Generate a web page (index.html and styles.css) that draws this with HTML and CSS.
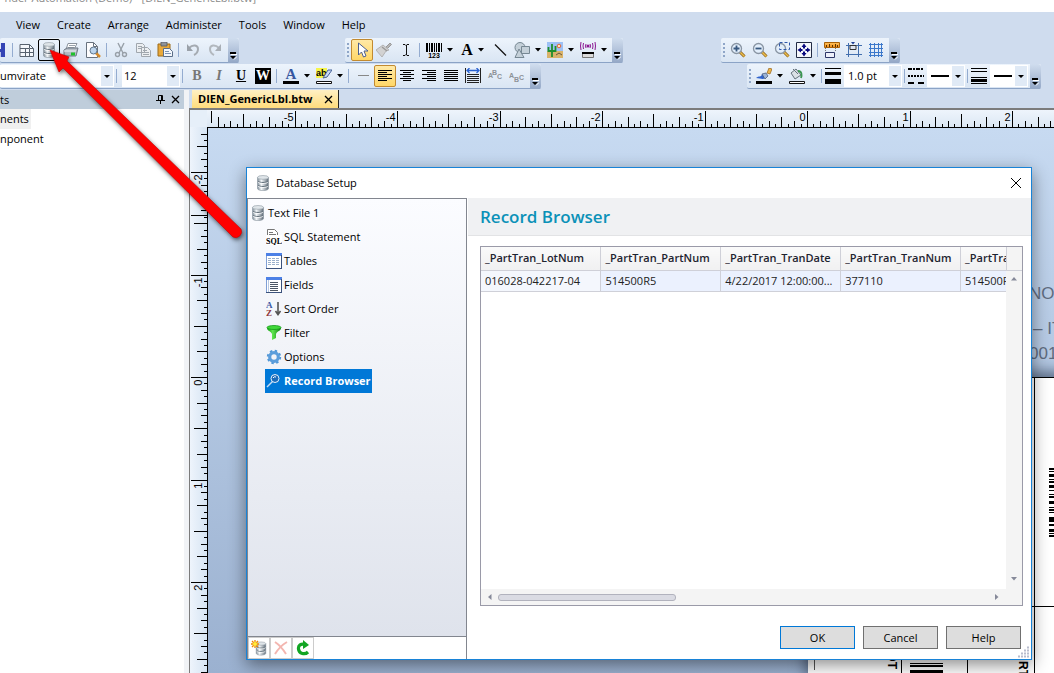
FILE: index.html
```
<!DOCTYPE html>
<html lang="en">
<head>
  <meta charset="UTF-8">
  <meta name="viewport" content="width=device-width, initial-scale=1.0">
  <title>Database Setup</title>
  <link rel="stylesheet" href="styles.css">
</head>
<body>

  <!-- shared icons -->
  <svg class="defs" aria-hidden="true">
    <defs>
      <linearGradient id="metal"><stop offset="0" stop-color="#7d8b96"/><stop offset=".35" stop-color="#f4f7f9"/><stop offset="1" stop-color="#5f6c78"/></linearGradient>
      <linearGradient id="leaf"><stop offset="0" stop-color="#119a11"/><stop offset=".4" stop-color="#5ee64e"/><stop offset="1" stop-color="#0a7d10"/></linearGradient>
      <linearGradient id="gold" x2="0" y2="1"><stop offset="0" stop-color="#ffc561"/><stop offset="1" stop-color="#ef8a16"/></linearGradient>
    </defs>
    <symbol id="db" viewBox="0 0 16 16">
      <path d="M2.500 2.500v11c0 2.800 11 2.800 11 0v-11z" fill="url(#metal)" stroke="#8a96a0" stroke-width=".6"/>
      <ellipse cx="8" cy="2.400" rx="5.500" ry="1.900" fill="#dfe5e9" stroke="#8f9aa3" stroke-width=".6"/>
      <path d="M3 6c1 2 9 2 10 0M3 10c1 2 9 2 10 0" fill="none" stroke="#65727d"/>
      <path d="M3 7c1 2 9 2 10 0M3 11c1 2 9 2 10 0" fill="none" stroke="#fff" stroke-width=".8"/>
    </symbol>
    <symbol id="lens" viewBox="0 0 16 16">
      <path d="M10 10l4.500 4.500" stroke="#8a5a10" stroke-width="3"/>
      <path d="M10 10l4.500 4.500" stroke="#e9bd4e" stroke-width="1.600"/>
      <circle cx="6.500" cy="6.500" r="5" fill="#e2eefb" stroke="#8995a3" stroke-width="1.300"/>
    </symbol>
    <symbol id="caret" viewBox="0 0 6 4"><path d="M0 0h6L3 3.500z"/></symbol>
    <symbol id="more" viewBox="0 0 7 8"><path d="M0 0h6v2H0zM0 4h6L3 7z"/><path d="M1 2.500h6M4 7.500l3-3" fill="none" stroke="#fff"/></symbol>
  </svg>

  <header class="titlebar"><div class="caption"><span>nder Automation (Demo) - [DIEN_GenericLbl.btw]</span></div></header>

  <nav class="menu">
    <button>View</button>
    <button>Create</button>
    <button>Arrange</button>
    <button>Administer</button>
    <button>Tools</button>
    <button>Window</button>
    <button>Help</button>
  </nav>

  <div class="toolrow">
    <div class="toolbar">
      <button class="tool clipped" aria-label="Save"><svg viewBox="0 0 16 16"><path d="M1 1h14v14H3l-2-2z" fill="#3444b5"/><path d="M4 1h7v6H4z" fill="#dfe6fb"/><path d="M5 10h6v5H5z" fill="#b9c3ea"/></svg></button>
      <i class="sep"></i>
      <button class="tool" aria-label="Page setup"><svg viewBox="0 0 16 16"><path d="M1 2.500h9.500l4 4v8H1z" fill="#f4f7fb" stroke="#56616e"/><path d="M10.500 2.500v4h4M1 6.500h9M1 10.500h14M6.500 6v8M10.500 7v7" fill="none" stroke="#56616e"/></svg></button>
      <button class="tool framed" aria-label="Database setup"><svg><use href="#db"/></svg></button>
      <button class="tool" aria-label="Print"><svg viewBox="0 0 16 16"><path d="M5 1.500h9l-3 6H3z" fill="#fff" stroke="#8a929c"/><path d="M6 3.500h6M5 5.500h6" stroke="#9aa3ac"/><path d="M1 8l3-2h11l-2 8H1z" fill="#b5bcc4" stroke="#6d7783"/><path d="M1 9h12" stroke="#eef2f6"/><path d="M8 10.500h4v3H8z" fill="#1fc32b"/></svg></button>
      <button class="tool" aria-label="Print preview"><svg viewBox="0 0 16 16"><path d="M1.500.5h7l4 4v11h-11z" fill="#fdfdfe" stroke="#68727e"/><path d="M8.500.5v4h4" fill="none" stroke="#68727e"/><path d="M11 11l4 4" stroke="#d58b2b" stroke-width="2.500"/><circle cx="8.500" cy="8.500" r="3.500" fill="#bcd5ee" stroke="#60768c"/></svg></button>
      <i class="sep"></i>
      <button class="tool" aria-label="Cut"><svg viewBox="0 0 16 16" fill="none" stroke="#98a0a8" stroke-width="1.400"><path d="M5 1l5 10M11 1L6 11"/><circle cx="4.500" cy="12.500" r="2"/><circle cx="11.500" cy="12.500" r="2"/></svg></button>
      <button class="tool" aria-label="Copy"><svg viewBox="0 0 16 16" fill="#eceff2" stroke="#a0a7ae"><path d="M1.500 1.500h6l2 2v7h-8zM6.500 5.500h6l3 3v6h-9z"/><path d="M3 4.500h4M3 6.500h3M8 8.500h4M8 10.500h6M8 12.500h6"/></svg></button>
      <button class="tool" aria-label="Paste"><svg viewBox="0 0 16 16"><path d="M1 2h12v12H1z" fill="#e9a93a" stroke="#9c6a19"/><path d="M4 0h6v4H4z" fill="#8f9399" stroke="#55595f" stroke-width=".8"/><path d="M6.500 6.500h6l3 3v5h-9z" fill="#f3f7fc" stroke="#5b6e88"/><path d="M8 9.500h4M8 11.500h6" stroke="#7b93b3"/></svg></button>
      <i class="sep"></i>
      <button class="tool" aria-label="Undo"><svg viewBox="0 0 16 16"><path d="M4 6c4-4 9-3 9 1 0 3-2 5-4 6" fill="none" stroke="#a5abb2" stroke-width="2"/><path d="M2 2v7h6z" fill="#9aa1a9"/></svg></button>
      <button class="tool" aria-label="Redo"><svg viewBox="0 0 16 16"><path d="M12 6c-4-4-9-3-9 1 0 3 2 5 4 6" fill="none" stroke="#b2b8be" stroke-width="2"/><path d="M14 2v7H8z" fill="#a9afb6"/></svg></button>
      <button class="overflow" aria-label="More"><svg><use href="#more"/></svg></button>
    </div>

    <div class="toolbar gap-create">
      <i class="grip"></i>
      <button class="tool active" aria-label="Select"><svg viewBox="0 0 16 16"><path d="M4.500 1v12l3-3 2 5 2.500-1-2-5h4z" fill="#fff" stroke="#4c5f8e"/></svg></button>
      <button class="tool" aria-label="Format painter"><svg viewBox="0 0 16 16"><path d="M10 5l4-4 1.500 1.500-4 4z" fill="#b5b5b5" stroke="#9a9a9a"/><path d="M7 3l6 5-3 1-4 6-6-7z" fill="#d2d2d2" stroke="#b3b3b3"/><path d="M6 5l5 4" stroke="#999" stroke-width="1.500"/></svg></button>
      <button class="tool" aria-label="Text cursor"><svg viewBox="0 0 16 16" fill="none" stroke="#111"><path d="M5 2.500h2l1 1 1-1h2M5 13.500h2l1-1 1 1h2M8.500 3v10"/></svg></button>
      <i class="sep"></i>
      <button class="tool split" aria-label="Barcode"><svg viewBox="0 0 16 16"><path d="M0 1h2v9H0zM3 1h1v9H3zM5 1h2v9H5zM8 1h1v9H8zM10 1h1v9h-1zM12 1h2v9h-2zM15 1h1v9h-1z"/><text x="8" y="16" class="tiny" text-anchor="middle">123</text></svg><svg class="caret"><use href="#caret"/></svg></button>
      <button class="tool split serif"><span>A</span><svg class="caret"><use href="#caret"/></svg></button>
      <button class="tool" aria-label="Line"><svg viewBox="0 0 16 16"><path d="M3 2.500l11 11" stroke="#111" stroke-width="1.200"/></svg></button>
      <button class="tool split" aria-label="Shape"><svg viewBox="0 0 16 16" fill="#c4d0d9" stroke="#768793"><circle cx="6" cy="5.500" r="5"/><path d="M5 7L1 15.500h9z"/><path d="M7.500 4.500h8v7h-8z"/></svg><svg class="caret"><use href="#caret"/></svg></button>
      <button class="tool split" aria-label="Picture"><svg viewBox="0 0 16 16"><path d="M0 0h16v16H0z" fill="#9dc1f5"/><path d="M0 9h16v7H0z" fill="#d9b36a"/><circle cx="12" cy="4" r="1.800" fill="#ffe3b8" stroke="#e0663a"/><path d="M5 2v13M1.500 5v4H5M8.500 4v5H5" fill="none" stroke="#1f8f2c" stroke-width="1.800"/><path d="M9 13l3-2 3 2" fill="none" stroke="#69573a"/></svg><svg class="caret"><use href="#caret"/></svg></button>
      <button class="tool split" aria-label="RFID"><svg viewBox="0 0 16 16"><path d="M1 0q-1 4 0 8M3.500 1q-1 3 0 6M6 2q-1 2 0 4M15 0q1 4 0 8M12.500 1q1 3 0 6M10 2q1 2 0 4" fill="none" stroke="#8d1a93"/><circle cx="8" cy="4" r="1.500" fill="#8d1a93"/><path d="M2.500 10.500h11v5h-11z" fill="#dcdcdc" stroke="#777"/><path d="M2 10h12v2H2z"/></svg><svg class="caret"><use href="#caret"/></svg></button>
      <button class="overflow" aria-label="More"><svg><use href="#more"/></svg></button>
    </div>

    <div class="toolbar gap-view">
      <i class="grip"></i>
      <button class="tool" aria-label="Zoom in"><svg viewBox="0 0 16 16"><use href="#lens"/><path d="M3.500 6.500h6M6.500 3.500v6" stroke="#38587f" stroke-width="1.800"/></svg></button>
      <button class="tool" aria-label="Zoom out"><svg viewBox="0 0 16 16"><use href="#lens"/><path d="M3.500 6.500h6" stroke="#38587f" stroke-width="1.800"/></svg></button>
      <button class="tool" aria-label="Zoom selection"><svg viewBox="0 0 16 16"><use href="#lens"/><path d="M5.500.5h10v7h-10z" fill="none" stroke="#2f57a8" stroke-dasharray="3 2"/></svg></button>
      <button class="tool" aria-label="Fit page"><svg viewBox="0 0 16 16"><path d="M.5.5h15v15H.5z" fill="#f5f7fb" stroke="#222b44"/><path d="M8 1.500L10.500 5h-5zM8 14.500L5.500 11h5zM1.500 8L5 5.500v5zM14.500 8L11 10.500v-5zM7 5h2v1.500H7zM7 9.500h2V11H7zM5 7h1.500v2H5zM9.500 7H11v2H9.500z" fill="#08087e"/></svg></button>
      <i class="sep"></i>
      <button class="tool" aria-label="Rulers"><svg viewBox="0 0 16 16"><path d="M.5.5h15v5H.5z" fill="url(#gold)" stroke="#a86008"/><path d="M2.500 5V3M5.500 5V2M8.500 5V3M11.500 5V2M13.500 5V3" stroke="#5a3200"/><path d="M1.500 6v4M11.500 6v4" stroke="#777" stroke-dasharray="1 1"/><path d="M1.500 10.500h9v5h-9z" fill="#eef1fb" stroke="#2e3768"/></svg></button>
      <button class="tool" aria-label="Snap to grid"><svg viewBox="0 0 16 16"><path d="M2.500 1v14M12.500 1v14M0 3.500h16M0 12.500h16" stroke="#426fae"/><path d="M4 3.500h6v4H4z" fill="#dfe6f2" stroke="#333"/><path d="M5 0h4L7 2.500z" fill="#1d3f96"/></svg></button>
      <button class="tool" aria-label="Grid"><svg viewBox="0 0 16 16"><path d="M2.500 1v14M6.500 1v14M10.500 1v14M13.500 1v14M1 2.500h14M1 6.500h14M1 10.500h14M1 13.500h14" stroke="#3b78cb"/></svg></button>
      <button class="overflow" aria-label="More"><svg><use href="#more"/></svg></button>
    </div>
  </div>

  <div class="toolrow">
    <div class="toolbar">
      <select class="combo font" aria-label="Font"><option>umvirate</option></select>
      <i class="sep"></i>
      <select class="combo size" aria-label="Font size"><option>12</option></select>
      <i class="sep"></i>
      <button class="tool serif muted">B</button>
      <button class="tool serif muted italic">I</button>
      <button class="tool serif underline">U</button>
      <button class="tool serif"><span class="inverse">W</span></button>
      <i class="sep"></i>
      <button class="tool split" aria-label="Font color"><svg viewBox="0 0 16 16"><text x="8" y="11" class="letter" text-anchor="middle">A</text><path d="M0 13h16v3H0z"/></svg><svg class="caret"><use href="#caret"/></svg></button>
      <button class="tool split" aria-label="Highlight"><svg viewBox="0 0 16 16"><path d="M0 0h11v10H0z" fill="#f7f54b"/><text x="0" y="8" class="ab">ab</text><path d="M7 10l5-8h4l-5 7z" fill="#c9dbf5" stroke="#466299"/><path d="M.5 13.500h15v2H.5z" fill="#fff" stroke="#111"/></svg><svg class="caret"><use href="#caret"/></svg></button>
      <i class="sep"></i>
      <button class="tool" aria-label="Line style"><svg viewBox="0 0 16 16"><path d="M3 7.500h11" stroke="#888"/></svg></button>
      <button class="tool active" aria-label="Align left"><svg viewBox="0 0 16 16"><path d="M1 2.500h14M1 4.500h9M1 6.500h14M1 8.500h9M1 10.500h14M1 12.500h9" stroke="#000"/></svg></button>
      <button class="tool" aria-label="Align center"><svg viewBox="0 0 16 16"><path d="M1 2.500h14M4 4.500h8M1 6.500h14M4 8.500h8M1 10.500h14M4 12.500h8" stroke="#000"/></svg></button>
      <button class="tool" aria-label="Align right"><svg viewBox="0 0 16 16"><path d="M1 2.500h14M6 4.500h9M1 6.500h14M6 8.500h9M1 10.500h14M6 12.500h9" stroke="#000"/></svg></button>
      <button class="tool" aria-label="Justify"><svg viewBox="0 0 16 16"><path d="M1 2.500h14M1 4.500h14M1 6.500h14M1 8.500h14M1 10.500h14M1 12.500h14" stroke="#000"/></svg></button>
      <button class="tool" aria-label="Fit width"><svg viewBox="0 0 16 16"><path d="M.5 0v15M15.500 0v15M2 6.500h12M2 8.500h12M2 10.500h12M2 12.500h12M2 14.500h12" stroke="#222"/><path d="M2 2.500h12M4.500 0L2 2.500 4.500 5M11.500 0L14 2.500 11.500 5" fill="none" stroke="#2a62d0" stroke-width="1.300"/></svg></button>
      <button class="tool" aria-label="Arc text up"><svg viewBox="0 0 16 16"><text class="arc" x="1" y="10">A</text><text class="arc" x="5" y="7">B</text><text class="arc" x="10" y="11">C</text></svg></button>
      <button class="tool" aria-label="Arc text down"><svg viewBox="0 0 16 16"><text class="arc" x="0" y="10">A</text><text class="arc" x="5" y="14">B</text><text class="arc" x="10" y="12">C</text></svg></button>
      <button class="overflow" aria-label="More"><svg><use href="#more"/></svg></button>
    </div>

    <div class="toolbar gap-line">
      <i class="grip"></i>
      <button class="tool split" aria-label="Line color"><svg viewBox="0 0 16 16"><path d="M0 10c3-3 5 0 6-4l3 4c-2 2-5 0-9 0z" fill="#2f62cc"/><path d="M6 6l4-1 2 3-3 3z" fill="#9db5d8" stroke="#41526f" stroke-width=".7"/><path d="M11 5l2-5 3 1-2 5z" fill="#eeb54a" stroke="#94631b" stroke-width=".7"/><path d="M0 13h16v3H0z"/></svg><svg class="caret"><use href="#caret"/></svg></button>
      <button class="tool split" aria-label="Fill color"><svg viewBox="0 0 16 16"><path d="M2 5l5-4 5 6-6 4z" fill="#dbe1e6" stroke="#66737d"/><path d="M4 1l5 5" stroke="#66737d"/><path d="M9 3c4 0 4 4 3 7" fill="none" stroke="#3a9650" stroke-width="1.800"/><path d="M.5 13.500h15v2H.5z" fill="#fff" stroke="#111"/></svg><svg class="caret"><use href="#caret"/></svg></button>
      <i class="sep"></i>
      <svg class="hint" viewBox="0 0 16 16"><path d="M0 0h16v1H0zM0 4h16v3H0zM0 11h16v5H0z"/></svg>
      <select class="combo weight" aria-label="Line thickness"><option>1.0 pt</option></select>
      <i class="sep"></i>
      <svg class="hint" viewBox="0 0 16 16" stroke="#000" stroke-width="2"><path d="M0 1h16" stroke-dasharray="4 1 2 1"/><path d="M0 8h16" stroke-dasharray="2 1"/><path d="M0 15h16" stroke-dasharray="6 4"/></svg>
      <select class="combo stroke" aria-label="Dash style"><option></option></select>
      <i class="sep"></i>
      <svg class="hint" viewBox="0 0 16 16"><path d="M0 0h16v1H0zM0 3h16v1H0zM0 9h16v1H0zM0 11h16v3H0zM0 15h16v1H0z"/></svg>
      <select class="combo stroke" aria-label="Compound style"><option></option></select>
      <button class="overflow" aria-label="More"><svg><use href="#more"/></svg></button>
    </div>
  </div>

  <main class="work">
    <aside class="panel">
      <h2>ts
        <span class="panel-buttons">
          <button aria-label="Pin"><svg viewBox="0 0 9 9" fill="none" stroke="#000"><path d="M2.500 5V.5h4V5M5.500 0v5M0 5.500h9M4.500 6v3"/></svg></button>
          <button aria-label="Close"><svg viewBox="0 0 9 9" stroke="#000" stroke-width="1.300"><path d="M1 1l7 7M8 1L1 8"/></svg></button>
        </span>
      </h2>
      <ul>
        <li><span class="hover">nents</span></li>
        <li><span>nponent</span></li>
      </ul>
    </aside>

    <section class="document">
      <div class="tabs">
        <div class="tab">
          <span>DIEN_GenericLbl.btw</span>
          <button aria-label="Close document"><svg viewBox="0 0 9 9" stroke="#000" stroke-width="1.300"><path d="M1 1l7 7M8 1L1 8"/></svg></button>
        </div>
      </div>
      <div class="sheet">
        <svg class="ruler across" id="rulerAcross"></svg>
        <svg class="ruler down" id="rulerDown"></svg>
        <div class="canvas">
          <p class="note note-a">NOT</p>
          <p class="note note-b">– ITE</p>
          <p class="note note-c">001</p>
          <svg class="label">
            <path d="M0 .5h300M226.500 0v300M0 229.500h260" stroke="#000"/>
            <path d="M6.500 270v23" stroke="#555"/>
            <path d="M93.500 240v60M159.500 240v60" stroke="#000"/>
            <path d="M102 286h33v1h-33zM102 288h33v2h-33zM102 293h33v4h-33z"/>
            <path d="M241 91h9v2h-9zM241 94h9v1h-9zM241 97h9v3h-9zM241 102h9v1h-9zM241 104h9v2h-9zM241 108h9v3h-9zM241 113h9v1h-9zM241 117h9v1h-9zM241 119h9v2h-9zM241 124h9v3h-9zM241 130h9v1h-9zM241 132h9v2h-9zM241 135h9v1h-9zM241 140h9v5h-9zM241 147h9v2h-9zM241 152h9v3h-9zM241 156h9v1h-9zM241 158h9v2h-9z"/>
            <text transform="translate(80 292) rotate(90)" text-anchor="end">LOT</text>
            <text transform="translate(211 284) rotate(90)">RT</text>
          </svg>
        </div>
      </div>
    </section>
  </main>

  <div class="dialog" role="dialog" aria-labelledby="dialogTitle">
    <div class="dialog-title">
      <svg class="icon"><use href="#db"/></svg>
      <span id="dialogTitle">Database Setup</span>
      <button aria-label="Close"><svg viewBox="0 0 12 12" stroke="#000"><path d="M1 1l10 10M11 1L1 11"/></svg></button>
    </div>

    <div class="dialog-body">
      <div class="side">
        <ul class="tree">
          <li class="root"><svg class="icon"><use href="#db"/></svg><span>Text File 1</span></li>
          <li><svg class="icon" viewBox="0 0 16 16"><path d="M1.500.5h7l3 3v6h-10z" fill="#fff" stroke="#777"/><path d="M3 3.500h4M3 5.500h7" stroke="#777"/><path d="M0 6h16v10H0z" fill="#fff"/><text x="0" y="15" class="sql">SQL</text></svg><span>SQL Statement</span></li>
          <li><svg class="icon" viewBox="0 0 16 16"><path d="M.5.5h15v15H.5z" fill="#fff" stroke="#7f9fd6"/><path d="M0 0h16v3H0z" fill="#4c80e6"/><path d="M2 5.500h12M2 7.500h12M2 9.500h12M2 11.500h12" stroke="#9bb0cc" stroke-dasharray="3 1"/><path d="M15.500 2v14M0 15.500h16" stroke="#3b527c"/></svg><span>Tables</span></li>
          <li><svg class="icon" viewBox="0 0 16 16"><path d="M.5.5h15v15H.5z" fill="#fff" stroke="#7f9fd6"/><path d="M0 0h16v3H0z" fill="#4c80e6"/><path d="M2.500 3v12" stroke="#b8c9e3"/><path d="M4 5.500h8M4 7.500h8M4 9.500h8M4 11.500h8M4 13.500h8" stroke="#4c5664"/><path d="M15.500 2v14M0 15.500h16" stroke="#3b527c"/></svg><span>Fields</span></li>
          <li><svg class="icon" viewBox="0 0 16 16"><text x="0" y="7" class="az" fill="#3d5ba5">A</text><text x="0" y="15" class="az" fill="#8f3639">Z</text><path d="M12 1v12M9.500 10l2.500 3.500 2.500-3.500" fill="none" stroke="#555" stroke-width="1.600"/></svg><span>Sort Order</span></li>
          <li><svg class="icon" viewBox="0 0 16 16"><path d="M1 3c0 3 4 3 5 6v6l4-2V9c1-3 5-3 5-6z" fill="url(#leaf)"/><ellipse cx="8" cy="2.500" rx="7" ry="2" fill="#41d83a" stroke="#169b1b" stroke-width=".8"/></svg><span>Filter</span></li>
          <li><svg class="icon" viewBox="0 0 16 16"><circle cx="8" cy="8" r="6.200" fill="none" stroke="#4f96d6" stroke-width="2" stroke-dasharray="2.400 2.470"/><circle cx="8" cy="8" r="4.300" fill="none" stroke="#5b9ddb" stroke-width="3.200"/></svg><span>Options</span></li>
          <li class="selected"><svg class="icon" viewBox="0 0 16 16"><path d="M6.500 8.500L1 14" stroke="#c5dcf5" stroke-width="1.500"/><circle cx="9" cy="5.500" r="4" fill="#1c6bb8" stroke="#e5f0fb" stroke-width="1"/><path d="M7 5q1-2 3-1" fill="none" stroke="#fff"/></svg><span>Record Browser</span></li>
        </ul>
        <div class="side-tools">
          <button aria-label="Add"><svg class="icon" viewBox="0 0 16 16"><svg x="3" y="1" width="14" height="15"><use href="#db"/></svg><path d="M4 0v8M0 4h8M1 1l6 6M7 1L1 7" stroke="#f08a00" stroke-width="1.300"/><circle cx="4" cy="4" r="2" fill="#ffeb3b"/></svg></button>
          <button aria-label="Delete"><svg class="icon" viewBox="0 0 16 16"><path d="M2 2q6 4 11 12M14 2Q7 6 2 14" fill="none" stroke="#f3b6b0" stroke-width="2"/></svg></button>
          <button aria-label="Refresh"><svg class="icon" viewBox="0 0 16 16"><path d="M10 4.500C6 3 3 5.500 3.500 9c.5 5 6.500 6 9.500 3" fill="none" stroke="#12a524" stroke-width="3.200"/><path d="M8 0l6 5-6 4z" fill="#12a524"/></svg></button>
        </div>
      </div>

      <div class="content">
        <h1>Record Browser</h1>
        <div class="records">
          <div class="rows">
            <table>
              <thead>
                <tr><th>_PartTran_LotNum</th><th>_PartTran_PartNum</th><th>_PartTran_TranDate</th><th>_PartTran_TranNum</th><th>_PartTran_Part</th></tr>
              </thead>
              <tbody>
                <tr><td>016028-042217-04</td><td>514500R5</td><td>4/22/2017 12:00:00...</td><td>377110</td><td>514500R5</td></tr>
              </tbody>
            </table>
          </div>
          <div class="scroll-y">
            <svg viewBox="0 0 6 4"><path d="M0 3.500h6L3 0z"/></svg>
            <svg viewBox="0 0 6 4"><path d="M0 0h6L3 3.500z"/></svg>
          </div>
          <div class="scroll-x">
            <svg viewBox="0 0 4 6"><path d="M3.500 0v6L0 3z"/></svg>
            <i class="thumb"></i>
            <svg viewBox="0 0 4 6"><path d="M0 0v6l3.500-3z"/></svg>
          </div>
        </div>
        <div class="actions">
          <button class="default">OK</button>
          <button>Cancel</button>
          <button>Help</button>
        </div>
      </div>
    </div>
    <svg class="resize" viewBox="0 0 12 12"><path d="M9 1.500h3M6 4.500h6M3 7.500h9M0 10.500h12" stroke="#b8bccd" stroke-width="2" stroke-dasharray="2 1"/></svg>
  </div>

  <svg class="arrow" viewBox="0 0 260 260">
    <path d="M50 50l19 7-2 4 174 168a6 6 0 0 1-8 8L63 68l-4 4z" fill="#fe0000" stroke="#c80000" stroke-width=".6"/>
  </svg>

  <script src="rulers.js"></script>
</body>
</html>
```
FILE: styles.css
```
* {
  box-sizing: border-box;
}

body {
  margin: 0;
  height: 100vh;
  display: flex;
  flex-direction: column;
  overflow: hidden;
  position: relative;
  background: #cfdcee;
  color: #000;
  font: 11px/16px "Open Sans", "Noto Sans", sans-serif;
}

button,
select {
  font: inherit;
  color: inherit;
  margin: 0;
  padding: 0;
  border: 0;
  background: none;
}

ul {
  list-style: none;
  margin: 0;
  padding: 0;
}

.defs {
  position: absolute;
  width: 0;
  height: 0;
}

.icon {
  width: 16px;
  height: 16px;
  flex: none;
}

/* window title and menu */
.titlebar {
  height: 12px;
  flex: none;
  background: #fff;
}

.caption {
  width: 256px;
  height: 12px;
  display: flex;
  align-items: flex-end;
  justify-content: flex-end;
  white-space: nowrap;
  overflow: hidden;
  color: #8a8a8a;
}

.caption span {
  padding-bottom: 6px;
}

.menu {
  height: 26px;
  flex: none;
  display: flex;
  align-items: center;
  gap: 17px;
  padding-left: 16px;
}

/* toolbars */
.toolrow {
  height: 26px;
  flex: none;
  display: flex;
}

.toolbar {
  display: flex;
  align-items: center;
  height: 25px;
  border-bottom: 1px solid #8ba3c6;
  border-radius: 2px;
  background: linear-gradient(#edf4fc, #d9e5f3);
}

.gap-create {
  margin-left: 106px;
}

.gap-view {
  margin-left: 98px;
}

.gap-line {
  margin-left: 206px;
}

.grip {
  width: 2px;
  height: 15px;
  margin: 0 2px;
  background: repeating-linear-gradient(#8fa6c8 0 2px, transparent 2px 4px);
}

.sep {
  width: 6px;
  height: 14px;
  border-left: 1px solid #94acd0;
  margin-left: 2px;
  margin-right: -2px;
}

.tool {
  width: 22px;
  height: 22px;
  flex: none;
  display: flex;
  align-items: center;
  justify-content: center;
}

.tool svg,
.hint {
  width: 16px;
  height: 16px;
  flex: none;
}

.hint {
  margin-right: 2px;
}

.split {
  width: 33px;
  gap: 5px;
}

.tool .caret {
  width: 6px;
  height: 4px;
}

.clipped {
  width: 10px;
  overflow: hidden;
  justify-content: flex-end;
  padding-right: 4px;
}

.framed {
  border: 1px solid #000;
  border-radius: 2px;
}

.active {
  border: 1px solid #c28a30;
  border-radius: 2px;
  background: linear-gradient(#ffe9a6, #ffd768);
}

.serif {
  font: bold 14px "Liberation Serif", serif;
}

.split.serif {
  font-size: 16px;
}

.muted {
  color: #777;
}

.italic {
  font-style: italic;
}

.underline {
  text-decoration: underline;
}

.inverse {
  width: 16px;
  background: #000;
  color: #fff;
  line-height: 16px;
}

.overflow {
  width: 11px;
  height: 25px;
  margin-left: 2px;
  display: flex;
  align-items: flex-end;
  justify-content: center;
  padding-bottom: 3px;
  border-radius: 0 3px 3px 0;
  background: linear-gradient(#d0ddee, #93a7c6);
}

.overflow svg {
  width: 7px;
  height: 8px;
}

.tiny {
  font: bold 7px "Liberation Sans", sans-serif;
}

.letter {
  font: bold 15px "Liberation Serif", serif;
  fill: #3757a0;
}

.ab {
  font: bold 9px "Liberation Sans", sans-serif;
}

.arc {
  font: bold 7px "Liberation Sans", sans-serif;
  fill: #8d9297;
}

.sql {
  font: bold 8px "Liberation Serif", serif;
}

.az {
  font: bold 9px "Liberation Serif", serif;
}

.combo {
  appearance: none;
  height: 22px;
  padding-left: 4px;
  border-radius: 0;
  background: url("data:image/svg+xml,%3Csvg xmlns='http://www.w3.org/2000/svg' width='12' height='20'%3E%3Cpath d='M0 0h12v20H0z' fill='%23e0eaf6'/%3E%3Cpath d='M3 9h6L6 12z'/%3E%3C/svg%3E") right 1px center no-repeat #fff;
}

.font {
  width: 114px;
  padding-left: 0;
}

.size {
  width: 58px;
  margin-left: 2px;
  padding-left: 2px;
}

.weight {
  width: 58px;
  margin-left: 1px;
}

.stroke {
  width: 38px;
  margin-left: 1px;
  background-image: url("data:image/svg+xml,%3Csvg xmlns='http://www.w3.org/2000/svg' width='33' height='20'%3E%3Cpath d='M21 0h12v20H21z' fill='%23e0eaf6'/%3E%3Cpath d='M24 9h6l-3 3zM0 9h18v2H0z'/%3E%3C/svg%3E");
}

/* side panel */
.work {
  flex: 1;
  min-height: 0;
  display: flex;
}

.panel {
  width: 184px;
  flex: none;
  background: #fff;
}

.panel h2 {
  display: flex;
  justify-content: space-between;
  align-items: center;
  height: 19px;
  margin: 0;
  padding-right: 4px;
  background: #bfcddb;
  font: inherit;
}

.panel-buttons {
  display: flex;
  gap: 6px;
}

.panel-buttons button,
.tab button {
  width: 9px;
  height: 9px;
  display: flex;
}

.panel li {
  height: 20px;
}

.panel li span {
  display: inline-block;
  line-height: 20px;
  padding-right: 2px;
}

.panel .hover {
  background: #f0f0f0;
}

/* document area */
.document {
  flex: 1;
  min-width: 0;
  display: flex;
  flex-direction: column;
  border-left: 5px solid #f1f3f6;
}

.tabs {
  height: 18px;
  flex: none;
  display: flex;
  padding: 0 0 0 3px;
  background: #cfdcee;
}

.tab {
  display: flex;
  align-items: center;
  gap: 12px;
  height: 18px;
  padding: 0 5px 0 6px;
  border-right: 1px solid #222;
  background: linear-gradient(#fff0c4, #ffdc7c);
  font-weight: bold;
}

.sheet {
  flex: 1;
  min-height: 0;
  display: grid;
  grid-template: 17px 1fr / 17px 1fr;
  border-top: 2px solid #7c7c7c;
  border-left: 1px solid #7c7c7c;
  background: #e6eff9;
}

.ruler {
  width: 100%;
  height: 100%;
  display: block;
  overflow: hidden;
  font: 11px "Liberation Sans", sans-serif;
}

.across {
  grid-column: 2;
  background: linear-gradient(#eef4fc, #dce8f4);
}

.down {
  grid-column: 1;
  background: linear-gradient(to right, #eef4fc, #d6e4f3);
}

.canvas {
  position: relative;
  overflow: hidden;
  border-top: 1px solid #000;
  border-left: 1px solid #000;
  background: linear-gradient(#c7daf1, #9bb1d0);
}

.label {
  position: absolute;
  left: 600px;
  top: 249px;
  width: 300px;
  height: 300px;
  background: #fff;
  box-shadow: 0 -3px 12px 3px rgba(40, 55, 80, .6);
  font: bold 12px "Liberation Sans", sans-serif;
}

.note {
  position: absolute;
  left: 821px;
  margin: 0;
  color: #5f6c80;
  font: 17px/20px "Liberation Sans", sans-serif;
  white-space: nowrap;
}

.note-a {
  top: 156px;
}

.note-b {
  top: 191px;
  left: 825px;
}

.note-c {
  top: 216px;
}

/* dialog */
.dialog {
  position: absolute;
  inset: 167px 22px 13px 246px;
  display: flex;
  flex-direction: column;
  border: 1px solid #1883d7;
  background: #fff;
  box-shadow: 0 5px 16px rgba(0, 0, 0, .45);
}

.dialog-title {
  height: 30px;
  flex: none;
  display: flex;
  align-items: center;
  gap: 5px;
  padding: 0 9px 0 8px;
}

.dialog-title button {
  width: 12px;
  height: 12px;
  display: flex;
  margin-left: auto;
}

.dialog-body {
  flex: 1;
  min-height: 0;
  display: flex;
  gap: 1px;
}

.side {
  width: 220px;
  flex: none;
  display: flex;
  flex-direction: column;
  border: 1px solid #82868f;
  border-bottom: 0;
}

.tree {
  flex: 1;
  padding: 2px;
  background: linear-gradient(#fbfcff, #dfe3ec);
}

.tree li {
  display: flex;
  align-items: center;
  gap: 2px;
  width: max-content;
  height: 24px;
  margin-left: 15px;
  padding: 0 1px;
}

.tree .root {
  margin-left: -1px;
}

.tree .selected {
  background: #0078d7;
  color: #fff;
  font-weight: bold;
}

.side-tools {
  height: 23px;
  display: flex;
  border-top: 1px solid #82868f;
}

.side-tools button {
  width: 22px;
  height: 22px;
  display: flex;
  align-items: center;
  justify-content: center;
  border: 1px solid #ccc;
}

.content {
  flex: 1;
  min-width: 0;
  display: flex;
  flex-direction: column;
}

h1 {
  margin: 0;
  height: 38px;
  padding-left: 12px;
  border-bottom: 1px solid #e2e3e5;
  background: #f0f1f3;
  color: #0b91b8;
  font: 600 17px/38px "Open Sans", "Noto Sans", sans-serif;
}

.records {
  flex: 1;
  min-height: 0;
  display: grid;
  grid-template: 1fr 16px / 1fr 16px;
  margin: 10px 8px 20px 12px;
  border: 1px solid #9a9aa8;
  background: #f4f4f4;
}

.rows {
  overflow: hidden;
  background: #fff;
}

table {
  table-layout: fixed;
  width: 600px;
  border-collapse: collapse;
}

th,
td {
  padding: 0 4px;
  text-align: left;
  white-space: nowrap;
  overflow: hidden;
  border-right: 1px solid #cfd0d8;
  border-bottom: 1px solid #cfd0d8;
}

th {
  height: 23px;
  background: linear-gradient(#fafafa, #f0f0f1);
  font-weight: 600;
  color: #1e2430;
}

td {
  height: 21px;
  background: #ebf1fe;
  color: #222;
}

td:first-child {
  background: #f4f7fd;
}

.records svg {
  fill: #868999;
}

.scroll-y {
  display: flex;
  flex-direction: column;
  justify-content: space-between;
  align-items: center;
  padding: 30px 0 8px;
  background:
    linear-gradient(#cfd0d8, #cfd0d8) 0 23px / 100% 1px no-repeat,
    linear-gradient(#cfd0d8, #cfd0d8) 0 0 / 1px 23px no-repeat;
}

.scroll-y svg {
  width: 6px;
  height: 4px;
}

.scroll-x {
  display: flex;
  align-items: center;
  padding: 0 7px;
}

.scroll-x svg {
  width: 4px;
  height: 6px;
}

.thumb {
  width: 178px;
  height: 7px;
  margin: 0 auto 0 6px;
  border: 1px solid #b1b2bd;
  border-radius: 3px;
  background: #dadbe3;
}

.actions {
  display: flex;
  justify-content: flex-end;
  gap: 8px;
  padding: 0 10px 10px;
}

.actions button {
  width: 75px;
  height: 23px;
  border: 1px solid #707070;
  background: #ddd;
}

.actions .default {
  border-color: #0078d7;
}

.resize {
  position: absolute;
  right: 1px;
  bottom: 1px;
  width: 12px;
  height: 12px;
}

/* callout arrow */
.arrow {
  position: absolute;
  left: 0;
  top: 0;
  width: 260px;
  height: 260px;
  pointer-events: none;
  filter: drop-shadow(1px 2px 2px rgba(0, 0, 0, .6));
}
```
FILE: rulers.js
```
var INCH = 102.5;
var NS = "http://www.w3.org/2000/svg";

// tick lengths for whole, half, quarter, eighth and sixteenth of an inch
function tickLength(n) {
  if (n % 16 === 0) return 16;
  if (n % 8 === 0) return 13;
  if (n % 4 === 0) return 10;
  if (n % 2 === 0) return 6;
  return 3;
}

function drawRuler(svg, zero, first, last, vertical) {
  var edge = 17;
  var d = "";
  for (var n = first; n <= last; n++) {
    var pos = Math.round(zero + n * INCH / 16) + 0.5;
    var from = edge - tickLength(n);
    d += vertical ? "M" + from + " " + pos + "H" + edge : "M" + pos + " " + from + "V" + edge;

    // last label past the right edge would be cut
    if (n % 16 === 0) {
      var text = document.createElementNS(NS, "text");
      text.textContent = n / 16;
      text.setAttribute("text-anchor", "end");
      if (vertical) {
        text.setAttribute("transform", "translate(12 " + (pos + 2) + ") rotate(-90)");
      } else {
        text.setAttribute("x", pos - 2);
        text.setAttribute("y", 11);
      }
      svg.appendChild(text);
    }
  }
  // pointer position mark
  d += vertical ? "M1 88.5H17" : "M4.5 1V13";
  var path = document.createElementNS(NS, "path");
  path.setAttribute("d", d);
  path.setAttribute("stroke", "#000");
  svg.appendChild(path);
}

drawRuler(document.getElementById("rulerAcross"), 600, -92, 40, false);
drawRuler(document.getElementById("rulerDown"), 250, -38, 46, true);
```
